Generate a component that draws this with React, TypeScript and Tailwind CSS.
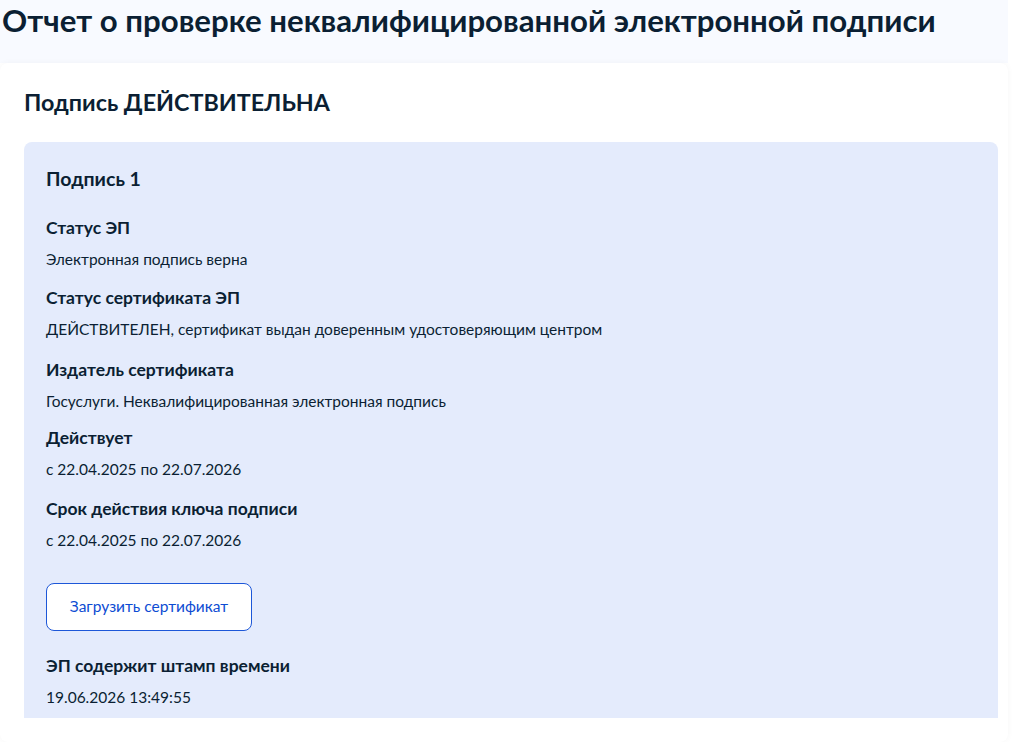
const items: { label: string; value: string; mt: string }[] = [
  { label: 'Статус ЭП', value: 'Электронная подпись верна', mt: 'mt-[25px]' },
  {
    label: 'Статус сертификата ЭП',
    value: 'ДЕЙСТВИТЕЛЕН, сертификат выдан доверенным удостоверяющим центром',
    mt: 'mt-[15px]',
  },
  { label: 'Издатель сертификата', value: 'Госуслуги. Неквалифицированная электронная подпись', mt: 'mt-[17px]' },
  { label: 'Действует', value: 'с 22.04.2025 по 22.07.2026', mt: 'mt-[13px]' },
  { label: 'Срок действия ключа подписи', value: 'с 22.04.2025 по 22.07.2026', mt: 'mt-[16px]' },
]

export default function App() {
  return (
    <div className="w-[1024px] h-[742px] overflow-hidden bg-white text-[#0b1f33] font-['Lato','Noto_Sans',sans-serif]">
      <div className="w-[1008px]">
        {/* Page title */}
        <div className="h-[63px] bg-[#f8faff] pl-[2px] pt-[1px]">
          <h1 className="text-[31.2px] leading-[38px] font-bold">
            Отчет о проверке неквалифицированной электронной подписи
          </h1>
        </div>

        <div className="bg-white rounded-lg shadow-[0_0_6px_rgba(11,31,51,0.04)] pl-6 pr-[10px] pt-[25px] h-[679px]">
          <h2 className="text-[23.3px] leading-[28px] font-bold">Подпись ДЕЙСТВИТЕЛЬНА</h2>

          <div className="mt-[26px] h-[576px] bg-[#e4ebfc] rounded-t-lg pl-[22px] pt-[25px]">
            <h3 className="text-[19.5px] leading-[24px] font-bold">Подпись 1</h3>

            {items.map(item => (
              <div key={item.label} className={item.mt}>
                <p className="text-[17.5px] leading-[24px] font-bold">{item.label}</p>
                <p className="mt-[7px] text-[15.5px] leading-[24px]">{item.value}</p>
              </div>
            ))}

            <button className="mt-[31px] w-[206px] h-[48px] rounded-lg border border-[#1d57d8] bg-white text-[15.5px] text-[#0d4cd3]">
              Загрузить сертификат
            </button>

            <div className="mt-[23px]">
              <p className="text-[17.5px] leading-[24px] font-bold">ЭП содержит штамп времени</p>
              <p className="mt-[7px] text-[15.5px] leading-[24px]">19.06.2026 13:49:55</p>
            </div>
          </div>
        </div>
      </div>
    </div>
  )
}
